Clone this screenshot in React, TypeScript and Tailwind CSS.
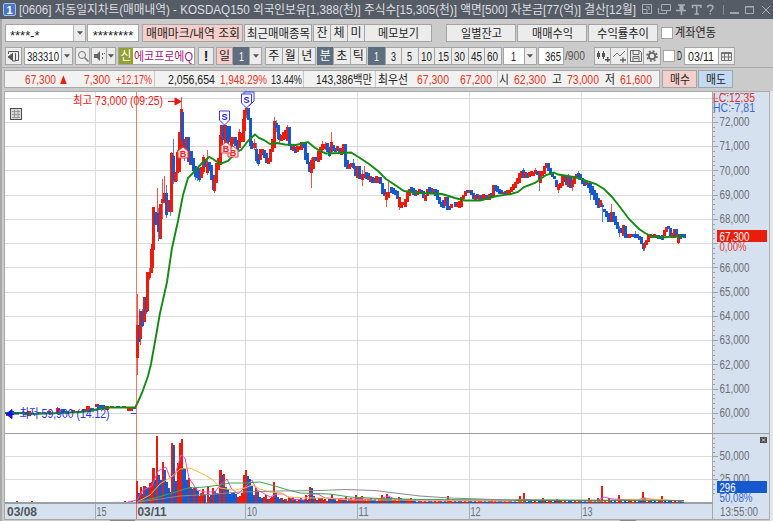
import type { ReactNode } from 'react';
import clsx from 'clsx';
import { twMerge } from 'tailwind-merge';

// [x, body top, body bottom, 1 = up / 0 = down, high, low]
type Candle = [number, number, number, number, number?, number?];

const candles: Candle[] = [
  [137, 325, 358, 1, 294, 375], [139, 326, 342, 0, 309, 342], [140.5, 311, 339, 1, 311, 345], [142.5, 311, 326, 0, 309, 327],
  [144, 297, 322, 1], [146, 297, 312, 0, 287, 314], [147.5, 272, 311, 1], [149.5, 272, 278, 1, 268, 280], [151, 249, 273, 1],
  [152, 244, 268, 1], [153.5, 207, 250, 1], [155, 212, 225, 0], [157, 213, 225, 1, 188, 225], [158.5, 213, 232, 0, 208, 241], [160.3, 204, 239, 1],
  [162.5, 199, 203, 1, 179, 219], [164, 193, 203, 1, 176, 203], [166, 193, 215, 0, 185, 218], [168, 200, 212, 1], [170, 201, 212, 0, 200, 216],
  [171.7, 153, 212, 1, 152, 212], [173.5, 156, 181, 0, 139, 184], [175.5, 172, 182, 1], [177, 152, 173, 1, 150, 181], [179, 132, 172, 1],
  [181, 109, 148, 1, 97, 148], [182.7, 112, 141, 0], [184.3, 139, 158, 0, 139, 161], [186, 137, 158, 1], [188, 137, 162, 0], [190, 151, 165, 1],
  [191.5, 151, 165, 0], [193.5, 158, 171, 0], [195.5, 166, 177, 0, 166, 180], [197.5, 168, 178, 0, 167, 181], [199.5, 168, 180, 0, 168, 182],
  [201, 167, 178, 1], [203, 157, 172, 1, 155, 174], [205, 160, 167, 0], [207, 162, 173, 1, 150, 175], [209, 162, 171, 0], [211, 165, 180, 0],
  [213, 175, 190, 0], [214.5, 178, 191, 1, 176, 193], [216.5, 163, 183, 1], [218.5, 158, 170, 1], [220, 135, 165, 1], [221.5, 125, 150, 1],
  [223.5, 125, 140, 0], [225.5, 125, 145, 1], [227, 126, 150, 0], [229, 126, 142, 0], [231, 137, 148, 1], [233, 137, 144, 1], [235, 137, 146, 0],
  [237, 140, 150, 0], [239, 132, 148, 1, 129, 148], [241, 133, 142, 1], [243, 119, 142, 1], [244.5, 110, 131, 1], [246.5, 108, 115, 1, 106, 118],
  [248.3, 108, 120, 0], [250, 118, 146, 0], [251.5, 141, 149, 0], [254, 143, 148, 1, 139, 150], [256, 149, 161, 0, 143, 163], [258, 154, 164, 0, 154, 166],
  [260, 149, 160, 1], [262, 149, 155, 1], [264, 150, 158, 0], [266, 153, 163, 0], [268, 158, 164, 1], [270, 149, 162, 1], [272, 139, 152, 1],
  [274, 121, 148, 1, 117, 148], [276, 123, 128, 0, 120, 132], [278, 125, 139, 0], [279.7, 134, 140, 0, 134, 144], [281.5, 135, 141, 1], [283.5, 132, 140, 1],
  [285.5, 130, 139, 1], [287, 127, 141, 1, 125, 141], [289, 127, 146, 0], [291, 145, 150, 0], [293, 144, 151, 1], [295, 147, 153, 0], [297, 146, 152, 1],
  [299, 146, 150, 1], [301, 142, 150, 1], [303, 142, 148, 0], [305, 143, 160, 0], [307, 153, 164, 0], [309.5, 162, 172, 0],
  [311.5, 160, 173, 1, 158, 188], [313.5, 157, 169, 1], [315.7, 157, 161, 0], [318, 151, 162, 1], [320.5, 147, 160, 1], [322.5, 144, 150, 1, 141, 152],
  [325, 144, 149, 1, 142, 150], [327, 143, 152, 0], [329, 147, 156, 0, 147, 157], [331.5, 142, 152, 1, 132, 153], [333.5, 145, 151, 0], [335.5, 148, 152, 0],
  [337.5, 146, 151, 1], [339.5, 148, 153, 0], [341.5, 148, 155, 1], [343.5, 144, 154, 1], [345.3, 144, 167, 0], [347, 160, 169, 0], [349, 164, 169, 1],
  [351, 163, 167, 1], [353, 163, 168, 0, 159, 169], [355, 166, 176, 0], [357, 166, 178, 1], [359, 166, 179, 0], [362, 174, 180, 1, 170, 186],
  [364, 174, 178, 1, 166, 178], [366, 172, 179, 0], [368, 173, 180, 0], [370, 176, 182, 1], [372, 177, 183, 0], [374, 178, 183, 0], [376, 176, 183, 1],
  [378, 177, 183, 1], [380, 177, 184, 0], [382, 183, 194, 0], [384, 189, 196, 0], [386.5, 192, 200, 1, 192, 207], [388.5, 192, 198, 1, 182, 198],
  [391, 187, 193, 0], [393, 188, 194, 0], [395, 190, 195, 0], [397, 191, 199, 0], [399, 197, 207, 1, 197, 210], [401, 202, 208, 1], [403, 202, 205, 1],
  [405, 199, 207, 1], [407, 191, 202, 1], [409, 189, 196, 1], [411, 187, 193, 0], [413, 188, 195, 0], [415, 190, 196, 0], [417, 191, 195, 1],
  [419, 189, 193, 1], [421, 190, 194, 0], [423, 191, 198, 0], [425, 195, 201, 1], [427, 189, 196, 1], [429, 187, 193, 0], [431, 188, 194, 0],
  [433, 189, 193, 1], [435, 189, 196, 0], [437, 190, 200, 0], [439, 197, 204, 0], [441, 202, 207, 0], [443, 200, 208, 0], [445.5, 197, 206, 1],
  [447.5, 197, 210, 0], [449.5, 206, 210, 0], [451.5, 204, 208, 1], [455, 202, 207, 0], [457, 202, 207, 1], [459, 201, 208, 1], [461, 197, 207, 1],
  [463, 195, 199, 1], [465, 191, 196, 1], [467, 190, 193, 0], [469, 190, 193, 1], [471, 190, 195, 0], [473, 193, 199, 0], [475, 195, 200, 1],
  [477, 194, 199, 0], [479, 195, 200, 1], [481, 195, 200, 0], [483, 194, 200, 1], [485, 195, 200, 1], [487, 195, 200, 0], [489, 194, 200, 1],
  [491, 193, 197, 0], [493, 185, 197, 1], [495, 185, 191, 0], [497, 186, 192, 0], [499, 189, 194, 0], [501, 190, 194, 0], [503, 192, 194, 1],
  [505, 191, 194, 0], [507, 190, 194, 1], [509, 190, 194, 1], [511, 187, 192, 1], [513, 184, 190, 1], [515, 182, 188, 1], [517, 178, 184, 1],
  [519, 173, 183, 1], [521, 171, 178, 1], [523, 170, 178, 0, 168, 178], [525, 172, 178, 1], [527, 173, 178, 0], [529, 172, 177, 1], [531, 171, 176, 1],
  [533, 172, 176, 1], [535.5, 170, 174, 1, 168, 174], [537.5, 171, 175, 0], [539, 172, 181, 0, 171, 191], [540.7, 171, 183, 1], [542.5, 171, 176, 1],
  [544.5, 166, 174, 1], [546.5, 163, 168, 1], [548.5, 163, 171, 0], [550.5, 168, 175, 0], [552.5, 173, 177, 0], [554.5, 176, 179, 0], [556.5, 180, 187, 0],
  [558.5, 184, 190, 1, 184, 193], [560.5, 183, 188, 1], [562.5, 176, 186, 1], [564.5, 175, 182, 1], [566.5, 176, 185, 0], [568.5, 176, 187, 1, 174, 187],
  [570.5, 176, 188, 0], [572.5, 180, 187, 1, 178, 191], [574.5, 176, 184, 1], [576.5, 174, 178, 1], [578.5, 173, 178, 0, 171, 180], [580.5, 174, 180, 0],
  [582.5, 178, 184, 0], [584.5, 180, 186, 0], [586.5, 182, 185, 1], [588.5, 183, 188, 0], [590, 183, 193, 0, 183, 200], [592, 186, 195, 0],
  [594, 190, 200, 0], [596, 193, 205, 0], [598, 198, 208, 0], [600, 200, 207, 1], [602, 205, 207, 0, 203, 222], [604.5, 209, 212, 0], [606.5, 211, 217, 0],
  [608.5, 213, 222, 0], [611, 212, 222, 1, 204, 222], [613, 212, 222, 0], [615, 216, 225, 0], [617, 222, 229, 0], [619, 229, 233, 0, 226, 237],
  [621, 228, 233, 0], [623, 225, 236, 1], [625, 226, 238, 0], [627, 234, 238, 0], [629, 234, 238, 1], [631, 234, 237, 1], [633, 234, 237, 0],
  [635, 234, 238, 0, 231, 238], [637, 234, 238, 0], [639, 236, 240, 0], [641, 237, 244, 0], [643, 243, 249, 0, 243, 251], [644.5, 244, 248, 1, 242, 251],
  [646.5, 240, 245, 1], [648.5, 235, 242, 1], [650.5, 234, 238, 1], [652.5, 235, 238, 0], [654.5, 234, 238, 1], [656.5, 235, 238, 1], [658.5, 235, 239, 0],
  [660.5, 236, 239, 0], [662.5, 235, 240, 0], [664.5, 230, 236, 1], [666.5, 227, 232, 1], [668.5, 226, 229, 0], [670.5, 228, 236, 0], [672.5, 233, 238, 1],
  [674.5, 229, 238, 1], [676.5, 229, 237, 0], [678.5, 234, 243, 1, 234, 244], [680.5, 234, 239, 0], [682.5, 234, 237, 0], [684, 234, 238, 0],
  // previous session
  [7, 413, 416, 1], [11, 411, 415, 0], [24, 412, 415, 0], [28, 411, 416, 1], [38, 412, 414, 0], [48, 411, 414, 1], [57, 408, 413, 1, 407, 413],
  [62, 409, 413, 0], [66, 411, 414, 0], [72, 410, 413, 1], [77, 411, 413, 1], [83, 409, 412, 1], [87, 406, 411, 1], [91, 408, 411, 0],
  [96, 404, 407, 1], [98.5, 405, 410, 0], [102, 405, 409, 0], [106, 406, 410, 1], [111, 406, 408, 1], [117, 406, 408, 0], [123, 406, 408, 1],
  [128, 407, 411, 1], [130, 408, 411, 1], [133, 407, 409, 0],
];

// [x, top, up] measured above the volume baseline
const volumes: [number, number, number][] = [
  [137, 481, 1], [139, 493, 0], [140.7, 487, 1], [142.5, 494, 0], [144.2, 486, 1], [146, 487, 0], [147.8, 488, 0], [149.5, 483, 1], [151.5, 482, 1],
  [153.3, 468, 1], [155, 480, 0], [157, 436, 1], [159, 475, 0], [161, 480, 0], [163, 462, 1], [165, 470, 0], [167, 482, 0], [169, 488, 0],
  [170.3, 492, 0], [171.7, 443, 1], [173.6, 445, 0], [175.5, 481, 0], [177.5, 463, 1], [179.5, 443, 1], [181.5, 439, 1], [183.2, 468, 0],
  [185, 468, 0], [186.8, 480, 0], [188.5, 478, 1], [190.3, 487, 0], [192, 489, 0], [194, 488, 1], [195.8, 487, 0], [197.5, 491, 0], [199.3, 496, 1],
  [201, 493, 1], [203, 489, 1], [205, 495, 0], [207.5, 487, 1], [209.3, 497, 1], [211, 495, 0], [212.7, 488, 1], [214.5, 491, 0], [216.3, 493, 0],
  [218, 494, 0], [220.3, 470, 1], [222, 475, 0], [224, 474, 1], [226, 487, 0], [228, 489, 0], [230, 494, 0], [232, 493, 0], [234, 493, 0],
  [236, 494, 0], [238, 497, 1], [240, 496, 1], [242, 493, 1], [244, 475, 1], [246, 470, 1], [248, 476, 0], [250, 479, 0], [252, 486, 0],
  [254, 495, 0], [256, 488, 1], [258, 491, 0], [260, 497, 0], [262, 498, 0], [264, 497, 1], [265.5, 495, 1], [267.5, 499, 0], [269.5, 500, 1],
  [272, 497, 1], [274, 482, 1], [276, 492, 0], [278, 497, 0], [280, 499, 0], [282, 498, 1], [284, 500, 0], [286, 499, 1], [288.5, 497, 1],
  [290.5, 500, 0], [292.5, 497, 1], [294.5, 499, 0], [306, 495, 1], [308, 500, 0], [309.7, 487, 1], [311.5, 488, 0], [313.3, 496, 0],
  [315, 498, 1], [317, 500, 0], [319, 498, 1], [322, 498, 1], [331.5, 494, 1], [333, 499, 0], [340, 499, 1], [346, 497, 1], [356, 495, 1],
  [358, 498, 0], [360, 497, 1], [362, 496, 1], [368, 499, 1], [382, 495, 1], [384, 498, 0], [387, 494, 1], [389, 497, 0], [399, 497, 1],
  [407, 499, 1], [448, 496, 1], [492, 499, 1], [520, 496, 1], [524, 493, 1], [543, 498, 1], [557, 499, 1], [589, 498, 1], [598, 498, 1],
  [602, 486, 1], [609, 498, 1], [619, 495, 1], [629, 499, 1], [643, 492, 1], [645, 498, 0], [662, 496, 1],
];

const priceAverage =
  '5,413 20,413 30,414 45,413.5 60,413 80,412 90,411 98,409 108,407.5 135,407.5 137,404 142,393 148,376 151,364 156,336 160,313 163,300 167,282 172,248 178,221 183,195 188,178 195,171 202,163 209,157 213,159 220,164 228,161 237,151.5 241,150 248,141 255,134.5 259,138 264,140 270,144 277,143 285,144.5 296,145 308,142 314,147 320,151 326,153.5 342,153 351,152.5 360,158 369,164 378,171 386,179 395,185 404,191 418,193 442,194 455,198 465,200.5 480,200.5 497,196 511,194 518,192 524,187 535,183 546,175 554,172.5 558,174.5 568,176 578,178 588,181.5 596,184 604,189 612,197 620,207 629,219 639,229 645,233 652,236.5 662,237.5 673,236.5 684,236.5';

const volumeAverages = [
  { stroke: '#e848c8', points: '128,502 137,500 143,490 152,486 158,471 166,467 170,478 175,475 181,455 185,458 189,478 197,490 205,492 215,492 220,485 227,479 231,488 238,494 245,487 252,480 257,490 263,493 270,497 277,494 283,494 292,499 304,500 310,494 318,494 325,498 350,499 380,499 388,496 395,499 420,501 510,501 523,499 532,500 596,501 604,497 612,499 636,500 645,498 655,500 684,501' },
  { stroke: '#f5b840', points: '137,502 150,495 160,484 171,477 180,469 190,468 205,475 213,480 220,488 234,490 245,488 252,485 260,489 270,492 282,493 288,497 305,498 325,498 350,500 400,500 520,501 540,500 600,501 650,499 684,501' },
  { stroke: '#35a855', points: '137,502 155,498 172,493 188,488 205,487 220,485 230,483 245,483 260,482 275,486 288,490 300,493 330,494 350,497 380,498.5 420,499.5 684,500.5' },
  { stroke: '#8a8a8a', points: '137,502 160,499 180,496 215,494 240,492 280,491 320,490.5 345,489.5 375,490.5 395,493 420,496 450,498 480,499 520,500.5 684,500.5' },
];

const gridX = [95, 245.5, 357, 469, 581];
const priceLabels = ['72,000', '71,000', '70,000', '69,000', '68,000', '', '66,000', '65,000', '64,000', '63,000', '62,000', '61,000', '60,000'];

// low, steady volume that runs through the whole session
const quietVolumes = Array.from({ length: 214 }, (_, i) => ({
  x: 256 + i * 2,
  height: (i < 80 ? 2.4 : 1.2) + ((i * 7) % 5) * (i < 80 ? 0.6 : 0.2),
  up: (i * 13) % 7 < 3,
}));

const RED = '#ea1c0c';
const BLUE = '#1659cf';

function ShieldMark({ x, y, label = 'S' }: { x: number; y: number; label?: string }) {
  return (
    <g>
      <path d={`M${x - 5} ${y - 6}h10v9l-5 5l-5 -5z`} fill="#fff" stroke="#3a3af0" />
      <text x={x} y={y + 3} fontSize="9" fontWeight="bold" textAnchor="middle" fill="#2222e8">{label}</text>
    </g>
  );
}

function BuyMark({ x, y }: { x: number; y: number }) {
  return (
    <g>
      <path d={`M${x - 5} ${y + 5}v-7l5 -4l5 4v7z`} fill="#ffe9e9" stroke="#f03a3a" />
      <text x={x} y={y + 4} fontSize="9" fontWeight="bold" textAnchor="middle" fill="#ee2222">B</text>
    </g>
  );
}

function Chart() {
  return (
    <svg width="773" height="433" viewBox="0 88 773 433" className="block shrink-0" shapeRendering="crispEdges">
      <rect x="0" y="88" width="773" height="433" fill="#cbcbcb" />
      <rect x="0" y="88" width="2" height="433" fill="#a9a9a9" />
      <rect x="4" y="91" width="767" height="429" fill="#a8a8a8" />
      <rect x="5" y="92" width="707" height="411" fill="#fff" />
      <rect x="713" y="92" width="56" height="427" fill="#d6e1f0" />
      <rect x="5" y="504" width="707" height="15" fill="#d6e1f0" />
      <rect x="769" y="91" width="1" height="429" fill="#aab0b8" />
      <rect x="770" y="91" width="3" height="430" fill="#e6e6e6" />
      <rect x="110" y="520" width="25" height="1" fill="#888" />
      <rect x="620" y="520" width="16" height="1" fill="#888" />

      {/* grid */}
      {Array.from({ length: 14 }, (_, i) => (
        <rect key={i} x="5" y={Math.round(97.5 + i * 24.27)} width="707" height="1" fill="#dcdcdc" />
      ))}
      {[456, 479].map((y) => <rect key={y} x="5" y={y} width="707" height="1" fill="#dcdcdc" />)}
      {gridX.map((x) => (
        <g key={x}>
          <rect x={x - 0.5} y="92" width="1" height="411" fill="#dcdcdc" />
          <rect x={x - 0.5} y="504" width="1" height="15" fill="#a4abb5" />
        </g>
      ))}
      <rect x="5" y="433" width="764" height="1" fill="#9c9c9c" />
      <rect x="5" y="502" width="708" height="2" fill="#9aa0a6" />

      {/* volume */}
      {quietVolumes.map((v) => (
        <rect key={v.x} x={v.x} y={503 - v.height} width="2" height={v.height} fill={v.up ? RED : BLUE} />
      ))}
      {volumes.map(([x, top, up]) => (
        <rect key={x} x={x - 1} y={top} width="2.4" height={503 - top} fill={up ? RED : BLUE} />
      ))}
      {[17, 32, 125, 132].map((x) => <rect key={x} x={x - 1} y="501" width="2" height="1" fill={RED} />)}
      <g fill="none" strokeWidth="1" shapeRendering="auto">
        {volumeAverages.map((line) => <polyline key={line.stroke} points={line.points} stroke={line.stroke} />)}
      </g>
      <path d="M516 500.5H684" stroke="#4c8a50" strokeWidth="1.5" />

      {/* price */}
      {candles.map(([x, top, bottom, up, high = top, low = bottom]) => (
        <g key={x} fill={up ? RED : BLUE}>
          <rect x={x - 0.5} y={high} width="1" height={low - high} opacity="0.75" />
          <rect x={x - 1.5} y={top} width={x < 136 ? 4 : 3} height={bottom - top} />
        </g>
      ))}
      <rect x="131" y="413" width="5" height="1" fill={BLUE} />
      <polyline points={priceAverage} fill="none" stroke="#138a13" strokeWidth="1.9" shapeRendering="auto" />
      <rect x="135.5" y="92" width="1" height="427" fill="#ea1c0c" opacity="0.6" />

      <g shapeRendering="auto">
        <BuyMark x={183} y={153} />
        <BuyMark x={233} y={152} />
        <BuyMark x={226} y={148} />
        <ShieldMark x={224.5} y={117} />
        <ShieldMark x={249} y={98} label="" />
        <ShieldMark x={246.5} y={100} />
        <path d="M168 101.5h8M175 98l6 3.5l-6 3.5z" fill="#f01010" stroke="#f01010" />
        <path d="M6 414l6 -4.500v9zM12 414h7" fill="#1010f0" stroke="#1010f0" />
        <g stroke="#4b4b4b" fill="#d9d9d9">
          <rect x="10.5" y="108.5" width="11" height="11" />
          <path d="M12 111.5h8M12 114.5h8M12 117.5h8M14.5 110v8M18 110v8" stroke="#888" strokeWidth="0.8" />
        </g>
      </g>
      <text x="73" y="105" textLength="90" lengthAdjust="spacingAndGlyphs" fontSize="12" fill="#f01818">최고 73,000 (09:25)</text>
      <text x="19.5" y="417.5" textLength="90" lengthAdjust="spacingAndGlyphs" fontSize="12" fill="#2c2cf0">최저 59,900 (14:12)</text>

      {/* price axis */}
      {Array.from({ length: 68 }, (_, i) => (
        <rect key={i} x="713" y={Math.round(97.5 + i * 4.854)} width={i % 5 === 0 ? 5 : 2} height="1" fill="#9aa1aa" />
      ))}
      {Array.from({ length: 13 }, (_, i) => (
        <rect key={i} x="713" y={Math.round(438 + i * 4.6)} width={i === 4 || i === 9 ? 5 : 2} height="1" fill="#9aa1aa" />
      ))}
      <g fontSize="12.5" fill="#6a6e74">
        {priceLabels.map((label, i) => label && (
          <text key={label} x="719.5" y={126 + i * 24.27} textLength="30" lengthAdjust="spacingAndGlyphs">{label}</text>
        ))}
        <path d="M720 93.5h29" stroke="#8a8e94" strokeDasharray="4 1" />
        <text x="719.5" y="460" textLength="30" lengthAdjust="spacingAndGlyphs">50,000</text>
        <text x="719.5" y="482.5" textLength="30" lengthAdjust="spacingAndGlyphs">25,000</text>
        <text x="720" y="515.5" textLength="38" lengthAdjust="spacingAndGlyphs">13:55:00</text>
        <text x="96.5" y="515.5" textLength="10" lengthAdjust="spacingAndGlyphs">15</text>
        <text x="247" y="515.5" textLength="10" lengthAdjust="spacingAndGlyphs">10</text>
        <text x="358.5" y="515.5" textLength="10" lengthAdjust="spacingAndGlyphs">11</text>
        <text x="470.5" y="515.5" textLength="10" lengthAdjust="spacingAndGlyphs">12</text>
        <text x="582.5" y="515.5" textLength="10" lengthAdjust="spacingAndGlyphs">13</text>
      </g>
      <g fontSize="12.5" fontWeight="bold" fill="#505459">
        <text x="7" y="515.5" textLength="30" lengthAdjust="spacingAndGlyphs">03/08</text>
        <text x="137.5" y="515.5" textLength="29" lengthAdjust="spacingAndGlyphs">03/11</text>
      </g>
      <g fontSize="12.5">
        <text x="713" y="102" textLength="42" lengthAdjust="spacingAndGlyphs" fill="#e03030">LC:12,35</text>
        <text x="713" y="112" textLength="42" lengthAdjust="spacingAndGlyphs" fill="#3a6ad0">HC:-7,81</text>
        <rect x="717" y="230" width="50" height="12" fill={RED} />
        <text x="719.5" y="240.5" textLength="30" lengthAdjust="spacingAndGlyphs" fill="#fff">67,300</text>
        <text x="719.5" y="251" textLength="27" lengthAdjust="spacingAndGlyphs" fill="#e03030">0,00%</text>
        <rect x="717" y="481" width="50" height="12" fill={BLUE} />
        <text x="719.5" y="491.5" textLength="16" lengthAdjust="spacingAndGlyphs" fill="#fff">296</text>
        <text x="719.5" y="502" textLength="33" lengthAdjust="spacingAndGlyphs" fill="#2d69d6">50,08%</text>
      </g>
      <rect x="760" y="437" width="7" height="6" fill="#4d4d4d" />
      <path d="M762 438.5l3 3M765 438.5l-3 3" stroke="#ddd" shapeRendering="auto" />
    </svg>
  );
}

// condensed terminal lettering: squeezes the text to a given width
function Label({ width, size = 12, className, children }: { width: number; size?: number; className?: string; children: string }) {
  return (
    <svg width={width} height="15" className={clsx('block shrink-0 overflow-visible', className)} fill="currentColor">
      <text x="0" y="12" fontSize={size} textLength={width} lengthAdjust="spacingAndGlyphs">{children}</text>
    </svg>
  );
}

function Box({ className, children }: { className?: string; children?: ReactNode }) {
  return (
    <div className={twMerge('flex h-[18px] shrink-0 items-center justify-center overflow-hidden whitespace-nowrap border border-[#a4a4a4] bg-[#ececec]', className)}>
      {children}
    </div>
  );
}

function Arrow() {
  return (
    <svg width="6" height="4" viewBox="0 0 7 4" className="shrink-0">
      <path d="M0 0h7L3.5 4z" fill="#555" />
    </svg>
  );
}

function TitleBar() {
  return (
    <div className="flex h-[19px] w-full shrink-0 items-center bg-[#565c66] pl-[3px]">
      <div className="flex size-[13px] shrink-0 items-center justify-center rounded-xs border border-[#a9c0ee] bg-[#4a74c4] text-[11px] font-bold text-white">1</div>
      <Label width={617} className="ml-[3px] mr-[2px] text-[#dcdfe3]">
        [0606] 자동일지차트(매매내역) - KOSDAQ150 외국인보유[1,388(천)] 주식수[15,305(천)] 액면[500] 자본금[77(억)] 결산[12월]
      </Label>
      <svg width="134" height="18" viewBox="638 0 134 18" className="shrink-0" fill="none" stroke="#a9aeb6">
        <path d="M642.500 12.500v-9h9v9zM642.500 8.500h4.500v4M646 6h3v3" />
        <path d="M661.500 3.500h9v6h-9zM658.500 7v5.500h8v-3" />
        <path d="M678 4h7M676 9.500h10M681.500 10v4" strokeWidth="1.600" />
        <path d="M681.500 4v5" strokeWidth="4" />
        <path d="M692.500 7v-2.500h8.500v2.500M696.700 4v9M694.500 13h4.500" strokeWidth="1.500" />
        <path d="M707.500 6.500c0 -3 5.500 -3 5.500 0c0 2 -2.700 2 -2.700 4.500M710.300 12v1.500" strokeWidth="1.500" />
        <path d="M723.500 4v10" stroke="#858b94" />
        <path d="M730 12h9" strokeWidth="1.800" />
        <path d="M745.500 5.500h8v7h-8zM745 6h9" />
        <path d="M762 5l8 8M770 5l-8 8" />
      </svg>
    </div>
  );
}

function AccountRow() {
  return (
    <div className="flex h-[23px] items-end gap-px pl-[5px]">
      <Box className="w-[81px] justify-start bg-white pl-[4px]">
        <span className="w-[30px] pt-[5px] text-[13px] tracking-[0px]">****-*</span>
        <span className="ml-auto flex h-full w-[12px] items-center justify-center border-l border-[#b5b5b5] bg-[#ececec]"><Arrow /></span>
      </Box>
      <Box className="w-[52px] bg-white pt-[5px] text-[13px]">********</Box>
      <Box className="ml-[2px] w-[101px] bg-[#f5cfcb]"><Label width={94}>매매마크/내역 조회</Label></Box>
      <Box className="w-[68px]"><Label width={63}>최근매매종목</Label></Box>
      <div className="flex">
        {['잔', '체', '미'].map((label) => <Box key={label} className="-mr-px w-[18px]">{label}</Box>)}
      </div>
      <Box className="-ml-px w-[68px]"><Label width={41}>메모보기</Label></Box>
      <Box className="ml-[13px] w-[70px]"><Label width={41}>일별잔고</Label></Box>
      <Box className="w-[70px]"><Label width={41}>매매수익</Label></Box>
      <Box className="w-[70px]"><Label width={52}>수익률추이</Label></Box>
      <Box className="mb-[3px] ml-[2px] size-[12px] bg-white" />
      <Label width={41} className="mb-[2px] ml-px">계좌연동</Label>
    </div>
  );
}

function SymbolRow() {
  const periods = ['주', '월', '년'];
  const units = ['분', '초', '틱'];
  const steps = ['1', '3', '5', '10', '15', '30', '45', '60'];
  const active = 'border-[#5e6e7f] bg-[#5e6e7f] text-white';

  return (
    <div className="flex h-[23px] items-end pl-[5px]">
      <Box className="w-[17px]">
        <svg width="13" height="12" fill="none" stroke="#555" className="shrink-0">
          <path d="M1.500 4v-2.500h10v9h-3M5.500 3v8h3M8.500 3v8" />
          <path d="M5 4v6L1 7z" fill="#555" />
        </svg>
      </Box>
      <Box className="ml-[2px] w-[38px] bg-white"><Label width={32} size={13}>383310</Label></Box>
      <Box className="-ml-px w-[12px]"><Arrow /></Box>
      <Box className="ml-[2px] w-[15px]">
        <svg width="12" height="12" fill="none" stroke="#777" className="shrink-0"><circle cx="5" cy="5" r="3.500" /><path d="M7.500 7.500l4 4" strokeWidth="1.500" /></svg>
      </Box>
      <Box className="ml-px w-[16px]">
        <svg width="12" height="12" fill="#666" className="shrink-0"><path d="M1 4h3l3 -3v10l-3 -3h-3zM9 3h1v2h-1zM9 7h1v2h-1zM11 3h1v1h-1z" /></svg>
      </Box>
      <Box className="-ml-px w-[10px]"><Arrow /></Box>
      <Box className="ml-[2px] w-[77px] justify-start bg-white">
        <span className="flex h-full w-[14px] shrink-0 items-center justify-center bg-[#93a032] text-white">신</span>
        <Label width={59} className="ml-px text-[#a02070]">에코프로에Q</Label>
      </Box>
      <Box className="ml-[3px] w-[16px] text-[14px] font-bold">!</Box>
      <Box className="ml-[2px] w-[17px] bg-[#f5cfcb]">일</Box>
      <Box className={twMerge('w-[16px]', active)}><Label width={5} size={13}>1</Label></Box>
      <Box className="w-[13px]"><Arrow /></Box>
      <div className="ml-[3px] flex">
        {periods.map((label) => <Box key={label} className="-mr-px w-[17.5px]">{label}</Box>)}
      </div>
      <div className="ml-[2px] flex">
        {units.map((label, i) => (
          <Box key={label} className={twMerge('-mr-px w-[17.5px]', i === 0 && active)}>{label}</Box>
        ))}
      </div>
      <div className="ml-[2px] flex">
        {steps.map((label, i) => (
          <Box key={label} className={twMerge('-mr-px w-[17.6px]', i === 0 && active)}>
            <Label width={label.length > 1 ? 11 : 5} size={13}>{label}</Label>
          </Box>
        ))}
      </div>
      <Box className="ml-[2px] w-[22px] bg-white"><Label width={5} size={13}>1</Label></Box>
      <Box className="-ml-px w-[13px]"><Arrow /></Box>
      <Box className="ml-px w-[26px] justify-end bg-white pr-[2px]"><Label width={16} size={13}>365</Label></Box>
      <Label width={20} size={13} className="mb-[2px] ml-[1px] mr-[9px] text-[#555]">/900</Label>
      <div className="flex">
        <Box className="-mr-px w-[17.5px]">
          <svg width="14" height="14" fill="#555" className="shrink-0"><path d="M1 4h3v4h-3zM2 2h1v8h-1zM6 4h3v4h-3zM7 2h1v8h-1zM9 10h5v1.500h-5zM11 8h1.500v5h-1.500z" /></svg>
        </Box>
        <Box className="-mr-px w-[17.5px]">
          <svg width="14" height="14" fill="none" stroke="#666" className="shrink-0"><path d="M1 8l4 -4l3 3l5 -5" strokeWidth="0.900" /><path d="M8 11h6M11 8.500v5" strokeWidth="1.600" /></svg>
        </Box>
        <Box className="-mr-px w-[17.5px]">
          <svg width="14" height="14" fill="none" stroke="#666" className="shrink-0"><path d="M1.500 1.500h9l2 2v9h-11zM4 1.500v4h6v-4M4 12.500v-5h6v5M5 9.500h4" /></svg>
        </Box>
        <Box className="w-[17.5px]">
          <svg width="14" height="14" fill="none" stroke="#666" className="shrink-0"><circle cx="7" cy="7" r="3.200" strokeWidth="1.800" /><circle cx="7" cy="7" r="5" strokeWidth="1.500" strokeDasharray="2 1.930" /></svg>
        </Box>
      </div>
      <Box className="mb-[3px] ml-[2px] size-[12px] bg-white" />
      <Label width={5} className="mb-[2px] ml-[2px] mr-[2px]">D</Label>
      <Box className="w-[35px] bg-white"><Label width={26} size={13}>03/11</Label></Box>
      <Box className="-ml-px w-[17px]">
        <svg width="11" height="10" fill="none" stroke="#666" className="shrink-0"><path d="M0.500 1.500h10v8h-10zM0 2.500h11M3.500 1v8M7.500 1v8M1 6h9" strokeWidth="0.900" /></svg>
      </Box>
    </div>
  );
}

type Quote = { text: string; width: number; gap: string; color?: string; size?: number };

const red = 'text-[#ea3323]';

// cells of the quote strip, split by thin dividers
const quoteGroups: { cell: string; items: Quote[] }[] = [
  {
    cell: 'w-[150px]',
    items: [
      { text: '67,300', width: 31, gap: 'ml-[20px]', color: red },
      { text: '▲', width: 11, gap: 'ml-[2px]', color: 'text-[#ea1c0c]', size: 15 },
      { text: '7,300', width: 26, gap: 'ml-[15px]', color: red },
      { text: '+12.17%', width: 36, gap: 'ml-[6px]', color: red },
    ],
  },
  {
    cell: 'w-[149px]',
    items: [
      { text: '2,056,654', width: 47, gap: 'ml-[13px]' },
      { text: '1,948.29%', width: 47, gap: 'ml-[5px]', color: red },
      { text: '13.44%', width: 31, gap: 'ml-[4px]' },
    ],
  },
  { cell: 'w-[72px]', items: [{ text: '143,386백만', width: 56, gap: 'ml-[12px]' }] },
  {
    cell: 'w-[122px]',
    items: [
      { text: '최우선', width: 30, gap: 'ml-[2px]' },
      { text: '67,300', width: 32, gap: 'ml-[9px]', color: red },
      { text: '67,200', width: 32, gap: 'ml-[11px]', color: red },
    ],
  },
  {
    cell: 'w-[160px] border-r-0',
    items: [
      { text: '시', width: 10, gap: 'ml-[1px]' },
      { text: '62,300', width: 32, gap: 'ml-[5px]', color: red },
      { text: '고', width: 10, gap: 'ml-[6px]' },
      { text: '73,000', width: 32, gap: 'ml-[5px]', color: red },
      { text: '저', width: 10, gap: 'ml-[6px]' },
      { text: '61,600', width: 32, gap: 'ml-[5px]', color: red },
    ],
  },
];

function QuoteRow() {
  return (
    <div className="mt-[2px] flex h-[22px] items-center border-t border-[#aaaaaa] pl-[4px] pt-px">
      <div className="flex h-[18px] w-[656px] shrink-0 items-center border border-[#aaa] bg-[#f2f2f2]">
        {quoteGroups.map((group) => (
          <div key={group.cell} className={twMerge('flex h-full shrink-0 items-center border-r border-[#c9c9c9]', group.cell)}>
            {group.items.map((quote) => (
              <Label key={quote.text + quote.gap} width={quote.width} size={quote.size ?? 12.5} className={clsx(quote.gap, quote.color)}>
                {quote.text}
              </Label>
            ))}
          </div>
        ))}
      </div>
      <Box className="ml-[2px] w-[35px] bg-[#f5cfcb]"><Label width={20}>매수</Label></Box>
      <Box className="ml-px w-[35px] bg-[#c3daf3]"><Label width={20}>매도</Label></Box>
    </div>
  );
}

export default function App() {
  return (
    <div className="flex h-[521px] w-[773px] flex-col overflow-hidden bg-[#cbcbcb] font-['Liberation_Sans','Noto_Sans_CJK_KR',sans-serif] text-[12px] leading-[16px] text-[#222]">
      <TitleBar />
      <div className="h-[69px] shrink-0 border-l-2 border-[#a9a9a9]">
        <div className="-ml-[2px]">
          <AccountRow />
          <SymbolRow />
          <QuoteRow />
        </div>
      </div>
      <Chart />
    </div>
  );
}
